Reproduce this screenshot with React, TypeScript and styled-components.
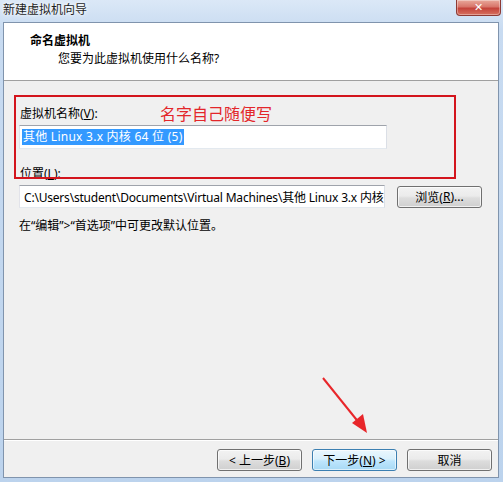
import React from 'react';
import styled, { createGlobalStyle } from 'styled-components';

const GlobalStyle = createGlobalStyle`
  html, body {
    margin: 0;
    padding: 0;
    background: #ffffff;
  }
  body {
    font-family: 'Noto Sans', 'Noto Sans CJK SC', sans-serif;
    font-size: 12px;
    color: #000;
  }
`;

const uiFont = `'Noto Sans', 'Noto Sans CJK SC', sans-serif`;

// Fenêtre
const Window = styled.div`
  position: relative;
  width: 503px;
  height: 482px;
  box-sizing: border-box;
  display: flex;
  flex-direction: column;
  background: linear-gradient(to bottom, #dbe8f7 0%, #c8dbf1 30px, #bcd3ed 100%);
  padding: 0 4px 4px 3px;
  overflow: hidden;
`;

const TitleBar = styled.div`
  height: 22px;
  flex: none;
  display: flex;
  align-items: flex-start;
  justify-content: space-between;
  margin-left: -3px;
  margin-right: -4px;
`;

const TitleText = styled.span`
  font-family: ${uiFont};
  font-size: 12px;
  line-height: 20px;
  padding-left: 3px;
  color: #1e1e1e;
  text-shadow: 0 0 6px #ffffff, 0 0 3px #ffffff;
`;

const CloseButton = styled.div`
  width: 45px;
  height: 16px;
  margin-right: 2px;
  box-sizing: border-box;
  border: 1px solid #8d3a34;
  border-top: none;
  border-radius: 0 0 4px 4px;
  background: linear-gradient(to bottom, #e9a99b 0%, #d8756a 45%, #c4433a 55%, #d7715f 100%);
  display: flex;
  align-items: center;
  justify-content: center;
  color: #ffffff;
  font-family: 'DejaVu Sans', sans-serif;
  font-weight: bold;
  font-size: 11px;
  line-height: 1;
  box-shadow: inset 0 0 0 1px rgba(255, 255, 255, 0.35);
`;

const Client = styled.div`
  flex: 1;
  display: flex;
  flex-direction: column;
  border: 1px solid #8094ad;
  background: #f0f0f0;
  min-height: 0;
`;

const Header = styled.div`
  height: 58px;
  flex: none;
  background: #ffffff;
  border-bottom: 1px solid #a0a0a0;
  padding: 10px 0 0 26px;
  box-sizing: border-box;
`;

const HeaderTitle = styled.div`
  font-family: ${uiFont};
  font-weight: bold;
  font-size: 12px;
  line-height: 16px;
`;

const HeaderSub = styled.div`
  font-family: ${uiFont};
  font-size: 12px;
  line-height: 16px;
  margin-top: 2px;
  padding-left: 28px;
`;

const Body = styled.div`
  flex: 1;
  padding: 25px 0 0 15px;
  display: flex;
  flex-direction: column;
  align-items: flex-start;
`;

const Label = styled.div<{ $gap?: number }>`
  font-family: ${uiFont};
  font-size: 12px;
  line-height: 16px;
  padding-left: 1px;
  margin-top: ${p => p.$gap ?? 0}px;
`;

const Field = styled.div<{ $width: number; $height: number; $gap?: number }>`
  width: ${p => p.$width}px;
  height: ${p => p.$height}px;
  margin-top: ${p => p.$gap ?? 0}px;
  flex: none;
  box-sizing: border-box;
  background: #ffffff;
  border: 1px solid #abadb3;
  border-top-color: #9fa3ab;
  border-left-color: #e2e3ea;
  border-right-color: #dbdfe6;
  border-bottom-color: #e3e9ef;
  display: flex;
  align-items: center;
  padding-left: 2px;
  overflow: hidden;
  white-space: nowrap;
  font-family: ${uiFont};
  font-size: 12px;
`;

const Selected = styled.span`
  background: #3399ff;
  color: #ffffff;
  line-height: 16px;
  padding: 0 1px;
  letter-spacing: 0.25px;
`;

const PathText = styled.span`
  padding-left: 2px;
  color: #000;
  letter-spacing: -0.2px;
`;

const Row = styled.div`
  display: flex;
  align-items: center;
  gap: 12px;
  margin-top: 3px;
`;

const Hint = styled.div`
  font-family: ${uiFont};
  font-size: 12px;
  line-height: 16px;
  margin-top: 10px;
`;

const Footer = styled.div`
  height: 38px;
  flex: none;
  border-top: 1px solid #a0a0a0;
  box-shadow: inset 0 1px 0 #ffffff;
  display: flex;
  justify-content: flex-end;
  align-items: flex-start;
  gap: 10px;
  padding: 9px 6px 0 0;
  box-sizing: border-box;
`;

const Button = styled.button<{ $default?: boolean }>`
  width: 85px;
  height: 22px;
  box-sizing: border-box;
  padding: 0;
  border-radius: 3px;
  border: 1px solid ${p => (p.$default ? '#3c7fb1' : '#707070')};
  background: ${p =>
    p.$default
      ? 'linear-gradient(to bottom, #eaf6fd 0%, #d9f0fc 45%, #bee6fd 55%, #a7d9f5 100%)'
      : 'linear-gradient(to bottom, #f2f2f2 0%, #ebebeb 45%, #dddddd 55%, #cfcfcf 100%)'};
  box-shadow: inset 0 0 0 1px ${p => (p.$default ? 'rgba(255,255,255,0.6)' : 'rgba(255,255,255,0.7)')};
  font-family: ${uiFont};
  font-size: 12px;
  color: #000;
  display: flex;
  align-items: center;
  justify-content: center;
`;

const Key = styled.span`
  text-decoration: underline;
`;

// Annotations par-dessus la fenêtre
const MarkBox = styled.div`
  position: absolute;
  left: 14px;
  top: 95px;
  width: 442px;
  height: 84px;
  box-sizing: border-box;
  border: 2px solid #d3141c;
  pointer-events: none;
`;

const MarkText = styled.div`
  position: absolute;
  left: 160px;
  top: 103px;
  font-family: 'Noto Sans CJK SC', sans-serif;
  font-size: 16px;
  line-height: 20px;
  color: #e3262a;
`;

const ArrowSvg = styled.svg`
  position: absolute;
  left: 0;
  top: 0;
  pointer-events: none;
`;

export default function App() {
  return (
    <>
      <GlobalStyle />
      <Window>
        <TitleBar>
          <TitleText>新建虚拟机向导</TitleText>
          <CloseButton>✕</CloseButton>
        </TitleBar>
        <Client>
          <Header>
            <HeaderTitle>命名虚拟机</HeaderTitle>
            <HeaderSub>您要为此虚拟机使用什么名称?</HeaderSub>
          </Header>
          <Body>
            <Label>
              虚拟机名称(<Key>V</Key>):
            </Label>
            <Field $width={368} $height={24} $gap={3}>
              <Selected>其他 Linux 3.x 内核 64 位 (5)</Selected>
            </Field>
            <Label $gap={17}>
              位置(<Key>L</Key>):
            </Label>
            <Row>
              <Field $width={366} $height={23}>
                <PathText>C:\Users\student\Documents\Virtual Machines\其他 Linux 3.x 内核</PathText>
              </Field>
              <Button>
                浏览(<Key>R</Key>)...
              </Button>
            </Row>
            <Hint>{'在“编辑”>“首选项”中可更改默认位置。'}</Hint>
          </Body>
          <Footer>
            <Button>
              &lt; 上一步(<Key>B</Key>)
            </Button>
            <Button $default>
              下一步(<Key>N</Key>) &gt;
            </Button>
            <Button>取消</Button>
          </Footer>
        </Client>

        <MarkBox />
        <MarkText>名字自己随便写</MarkText>
        <ArrowSvg width="503" height="482" viewBox="0 0 503 482">
          <line x1="323" y1="378" x2="360" y2="424" stroke="#e8262a" strokeWidth="2" />
          <polygon points="367,433 352,423 363,414" fill="#e8262a" />
        </ArrowSvg>
      </Window>
    </>
  );
}
